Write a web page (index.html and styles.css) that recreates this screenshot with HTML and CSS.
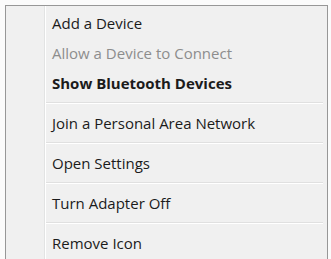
FILE: index.html
```html
<!DOCTYPE html>
<html>
<head>
<meta charset="utf-8">
<link rel="stylesheet" href="styles.css">
</head>
<body>
<div class="menu">
  <div class="gutter"></div>
  <ul class="items">
    <li class="item">Add a Device</li>
    <li class="item disabled">Allow a Device to Connect</li>
    <li class="item bold">Show Bluetooth Devices</li>
    <li class="sep"></li>
    <li class="item">Join a Personal Area Network</li>
    <li class="sep"></li>
    <li class="item">Open Settings</li>
    <li class="sep"></li>
    <li class="item">Turn Adapter Off</li>
    <li class="sep"></li>
    <li class="item">Remove Icon</li>
  </ul>
</div>
</body>
</html>
```
FILE: styles.css
```css
html, body {
  margin: 0;
  padding: 0;
  background: #fbfbfb;
  overflow: hidden;
}
body {
  padding: 5px 0 0 5px;
  height: 254px;
}
.menu {
  width: 321px;
  height: 253px;
  border: 1px solid #979797;
  border-bottom: none;
  background: #f0f0f0;
  display: flex;
  overflow: hidden;
  font-family: "Open Sans", "Noto Sans", sans-serif;
  font-size: 15px;
  color: #1b1b1b;
}
.gutter {
  width: 38px;
  flex: none;
  border-right: 1px solid #e2e3e3;
  box-shadow: 1px 0 0 #ffffff;
}
.items {
  list-style: none;
  margin: 0;
  padding: 2px 0 0 0;
  flex: 1;
}
.item {
  height: 30px;
  line-height: 30px;
  padding-left: 7px;
  white-space: nowrap;
}
.disabled { color: #8d8d8d; }
.bold { font-weight: 700; }
.sep {
  height: 10px;
  box-sizing: border-box;
  padding: 4px 4px 0 1px;
}
.sep::before {
  content: "";
  display: block;
  height: 1px;
  background: #e0e0e0;
  border-bottom: 1px solid #ffffff;
}
```
